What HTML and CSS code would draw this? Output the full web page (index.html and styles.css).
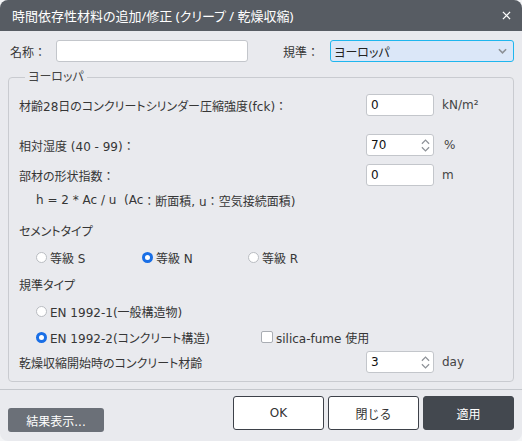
FILE: index.html
```html
<!DOCTYPE html>
<html lang="ja">
<head>
<meta charset="utf-8">
<title>時間依存性材料の追加/修正</title>
<link rel="stylesheet" href="styles.css">
</head>
<body>
<div class="dialog">
  <div class="titlebar">
    <span class="title">時間依存性材料の追加/修正 (クリープ / 乾燥収縮)</span>
    <svg class="close" viewBox="0 0 10 10"><path d="M1 1L9 9M9 1L1 9"/></svg>
  </div>
  <div class="content">
    <div class="toprow">
      <span class="name-lbl">名称<span class="colon">：</span></span>
      <div class="field name-field"></div>
      <span class="std-lbl">規準<span class="colon">：</span></span>
      <div class="select">
        <span class="select-val">ヨーロッパ</span>
        <svg class="chev" viewBox="0 0 10 6"><path d="M1 1L5 5L9 1"/></svg>
      </div>
    </div>
    <fieldset class="group">
      <legend>ヨーロッパ</legend>
      <div class="frow r-fck">
        <span class="flabel">材齢28日のコンクリートシリンダー圧縮強度(fck)<span class="colon">：</span></span>
        <div class="field num">0</div>
        <span class="unit">kN/m²</span>
      </div>
      <div class="frow r-hum">
        <span class="flabel">相対湿度 (40 - 99)<span class="colon">：</span></span>
        <div class="field num spin">70
          <svg class="spin-ic" viewBox="0 0 10 16"><path d="M1 6L5 2L9 6M1 10L5 14L9 10"/></svg>
        </div>
        <span class="unit unit-pct">%</span>
      </div>
      <div class="frow r-shape">
        <span class="flabel">部材の形状指数<span class="colon">：</span></span>
        <div class="field num">0</div>
        <span class="unit">m</span>
      </div>
      <div class="trow indent r-formula">h = 2 * Ac / u&nbsp;&nbsp;(Ac<span class="colon">：</span>断面積, u<span class="colon">：</span>空気接続面積)</div>
      <div class="trow r-cement">セメントタイプ</div>
      <div class="trow indent r-radios">
        <label class="opt w106"><span class="radio"></span>等級 S</label>
        <label class="opt w106"><span class="radio on"></span>等級 N</label>
        <label class="opt"><span class="radio"></span>等級 R</label>
      </div>
      <div class="trow r-stdtype">規準タイプ</div>
      <div class="trow indent r-en1">
        <label class="opt"><span class="radio"></span>EN 1992-1(一般構造物)</label>
      </div>
      <div class="trow indent r-en2">
        <label class="opt w225"><span class="radio on"></span>EN 1992-2(コンクリート構造)</label>
        <label class="opt"><span class="check"></span>silica-fume 使用</label>
      </div>
      <div class="frow r-dry">
        <span class="flabel">乾燥収縮開始時のコンクリート材齢</span>
        <div class="field num spin">3
          <svg class="spin-ic" viewBox="0 0 10 16"><path d="M1 6L5 2L9 6M1 10L5 14L9 10"/></svg>
        </div>
        <span class="unit">day</span>
      </div>
    </fieldset>
  </div>
  <div class="footer">
    <button class="btn btn-result">結果表示...</button>
    <div class="actions">
      <button class="btn btn-light">OK</button>
      <button class="btn btn-light">閉じる</button>
      <button class="btn btn-dark">適用</button>
    </div>
  </div>
</div>
</body>
</html>
```

FILE: styles.css
```css
* { box-sizing: border-box; }
html, body { margin: 0; padding: 0; }
body {
  background: #f3f4f6;
  font-family: "DejaVu Sans", "Noto Sans CJK JP", sans-serif;
  font-size: 12px;
  color: #363636;
}
.dialog {
  width: 522px;
  height: 441px;
  background: #e9eaee;
  border-radius: 8px;
  overflow: hidden;
  display: flex;
  flex-direction: column;
}
.titlebar {
  height: 31px;
  flex: none;
  background: #575c63;
  color: #fff;
  display: flex;
  align-items: center;
  padding: 0 11px 0 12px;
  font-family: "Noto Sans", "Noto Sans CJK JP", sans-serif;
  font-size: 13px;
}
.title { flex: 1; font-feature-settings: "palt"; white-space: nowrap; }
.close { width: 9px; height: 9px; fill: none; stroke: #fff; stroke-width: 1.4; }

.colon { font-feature-settings: normal; }

.content { padding: 9px 8px 0 8px; }
.toprow { display: flex; align-items: center; height: 22px; }
.name-lbl { width: 48px; padding-left: 2px; }
.field {
  background: #fff;
  border: 1px solid #c3c6cb;
  border-radius: 3px;
  height: 22px;
}
.name-field { width: 192px; }
.std-lbl { width: 47px; margin-left: 35px; }
.select {
  width: 184px;
  height: 22px;
  border: 1px solid #1fb6ee;
  border-radius: 3px;
  background: #dbe7f8;
  display: flex;
  align-items: center;
  padding: 0 6px 0 3px;
  font-feature-settings: "palt";
}
.select-val { flex: 1; color: #222; }
.chev { width: 9px; height: 6px; fill: none; stroke: #8c9096; stroke-width: 1.8; }

.group {
  margin: 7px 0 0 0;
  padding: 0 10px 8px 10px;
  border: 1px solid #c9cbd0;
  border-radius: 4px;
  min-width: 0;
}
.group legend {
  padding: 0 3px;
  margin-left: 6px;
  line-height: 16px;
  color: #444;
  font-feature-settings: "palt";
}
.frow {
  display: grid;
  grid-template-columns: 347px 68px auto;
  align-items: center;
  height: 22px;
}
.flabel { font-feature-settings: "palt"; white-space: nowrap; }
.num { display: flex; align-items: center; padding-left: 4px; color: #111; position: relative; }
.spin-ic {
  position: absolute;
  right: 3px;
  top: 3px;
  width: 9px;
  height: 15px;
  fill: none;
  stroke: #8e9298;
  stroke-width: 1.4;
}
.unit { margin-left: 8px; color: #444; }
.unit-pct { margin-left: 10px; }
.trow {
  height: 20px;
  display: flex;
  align-items: center;
  white-space: nowrap;
  font-feature-settings: "palt";
}
.indent { padding-left: 17px; }
.r-fck { margin-top: 9px; }
.r-hum { margin-top: 18px; }
.r-shape { margin-top: 8px; }
.r-formula { margin-top: 4px; }
.r-cement { margin-top: 10px; }
.r-radios { margin-top: 7px; }
.r-stdtype { margin-top: 7px; }
.r-en1 { margin-top: 7px; }
.r-en2 { margin-top: 6px; }
.r-dry { margin-top: 4px; }

.opt { display: flex; align-items: center; }
.w106 { width: 106px; }
.w225 { width: 225px; }
.radio {
  width: 11px;
  height: 11px;
  border-radius: 50%;
  border: 1px solid #b9bcc1;
  background: #fff;
  margin-right: 3px;
  flex: none;
}
.radio.on { border: 3px solid #1a6fe6; }
.check {
  width: 12px;
  height: 12px;
  border: 1px solid #a9adb3;
  border-radius: 2px;
  background: #fff;
  margin-right: 3px;
  flex: none;
}

.footer {
  margin-top: 7px;
  border-top: 1px solid #c4c7cc;
  padding: 6px 8px 0 8px;
  display: flex;
  align-items: flex-start;
}
.btn {
  font-family: inherit;
  font-size: 12px;
  border-radius: 3px;
  cursor: pointer;
}
.btn-result {
  margin-top: 12px;
  width: 96px;
  height: 24px;
  background: #6b7078;
  color: #fff;
  border: none;
}
.actions { margin-left: auto; display: flex; gap: 4px; }
.btn-light, .btn-dark { width: 91px; height: 34px; }
.btn-light { background: #fff; border: 1px solid #3d4149; color: #333; }
.btn-dark { background: #43484f; border: 1px solid #43484f; color: #fff; }
```
